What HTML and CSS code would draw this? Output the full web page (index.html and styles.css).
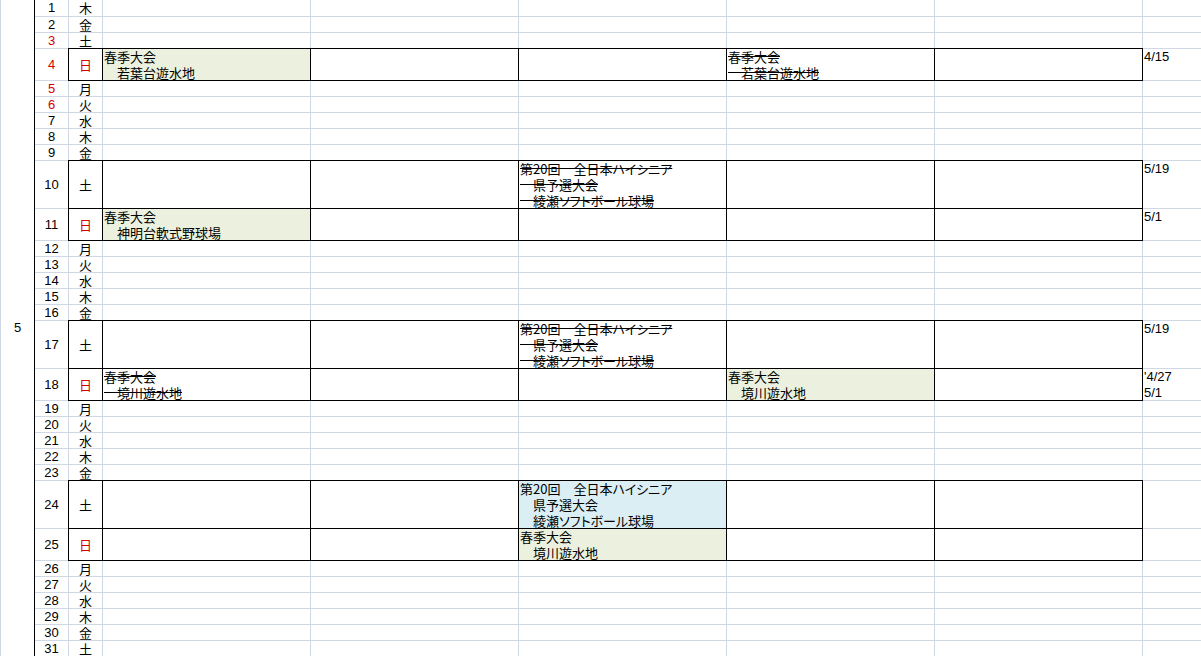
FILE: index.html
```html
<!DOCTYPE html>
<html lang="ja">
<head>
    <meta charset="UTF-8">
    <meta name="viewport" content="width=device-width, initial-scale=1.0">
    <title>5月 予定表</title>
    <link rel="stylesheet" href="styles.css">
</head>
<body>
    <div class="sheet">
        <div class="month">5</div>
        <div class="num">1</div><div class="wd">木</div><div></div><div></div><div></div><div></div><div></div><div></div>
        <div class="num">2</div><div class="wd">金</div><div></div><div></div><div></div><div></div><div></div><div></div>
        <div class="num red">3</div><div class="wd">土</div><div></div><div></div><div></div><div></div><div></div><div></div>
        <div class="num red">4</div><div class="wd box red">日</div><div class="box green">春季大会<br>　若葉台遊水地</div><div class="box"></div><div class="box"></div><div class="box del">春季大会<br>　若葉台遊水地</div><div class="box"></div><div class="memo">4/15</div>
        <div class="num red">5</div><div class="wd">月</div><div></div><div></div><div></div><div></div><div></div><div></div>
        <div class="num red">6</div><div class="wd">火</div><div></div><div></div><div></div><div></div><div></div><div></div>
        <div class="num">7</div><div class="wd">水</div><div></div><div></div><div></div><div></div><div></div><div></div>
        <div class="num">8</div><div class="wd">木</div><div></div><div></div><div></div><div></div><div></div><div></div>
        <div class="num">9</div><div class="wd">金</div><div></div><div></div><div></div><div></div><div></div><div></div>
        <div class="num">10</div><div class="wd box">土</div><div class="box"></div><div class="box"></div><div class="box del">第20回　全日本ハイシニア<br>　県予選大会<br>　綾瀬ソフトボール球場</div><div class="box"></div><div class="box"></div><div class="memo">5/19</div>
        <div class="num">11</div><div class="wd box red">日</div><div class="box green">春季大会<br>　神明台軟式野球場</div><div class="box"></div><div class="box"></div><div class="box"></div><div class="box"></div><div class="memo">5/1</div>
        <div class="num">12</div><div class="wd">月</div><div></div><div></div><div></div><div></div><div></div><div></div>
        <div class="num">13</div><div class="wd">火</div><div></div><div></div><div></div><div></div><div></div><div></div>
        <div class="num">14</div><div class="wd">水</div><div></div><div></div><div></div><div></div><div></div><div></div>
        <div class="num">15</div><div class="wd">木</div><div></div><div></div><div></div><div></div><div></div><div></div>
        <div class="num">16</div><div class="wd">金</div><div></div><div></div><div></div><div></div><div></div><div></div>
        <div class="num">17</div><div class="wd box">土</div><div class="box"></div><div class="box"></div><div class="box del">第20回　全日本ハイシニア<br>　県予選大会<br>　綾瀬ソフトボール球場</div><div class="box"></div><div class="box"></div><div class="memo">5/19</div>
        <div class="num">18</div><div class="wd box red">日</div><div class="box del">春季大会<br>　境川遊水地</div><div class="box"></div><div class="box"></div><div class="box green">春季大会<br>　境川遊水地</div><div class="box"></div><div class="memo">'4/27<br>5/1</div>
        <div class="num">19</div><div class="wd">月</div><div></div><div></div><div></div><div></div><div></div><div></div>
        <div class="num">20</div><div class="wd">火</div><div></div><div></div><div></div><div></div><div></div><div></div>
        <div class="num">21</div><div class="wd">水</div><div></div><div></div><div></div><div></div><div></div><div></div>
        <div class="num">22</div><div class="wd">木</div><div></div><div></div><div></div><div></div><div></div><div></div>
        <div class="num">23</div><div class="wd">金</div><div></div><div></div><div></div><div></div><div></div><div></div>
        <div class="num">24</div><div class="wd box">土</div><div class="box"></div><div class="box"></div><div class="box blue">第20回　全日本ハイシニア<br>　県予選大会<br>　綾瀬ソフトボール球場</div><div class="box"></div><div class="box"></div><div class="memo"></div>
        <div class="num">25</div><div class="wd box red">日</div><div class="box"></div><div class="box"></div><div class="box green">春季大会<br>　境川遊水地</div><div class="box"></div><div class="box"></div><div class="memo"></div>
        <div class="num">26</div><div class="wd">月</div><div></div><div></div><div></div><div></div><div></div><div></div>
        <div class="num">27</div><div class="wd">火</div><div></div><div></div><div></div><div></div><div></div><div></div>
        <div class="num">28</div><div class="wd">水</div><div></div><div></div><div></div><div></div><div></div><div></div>
        <div class="num">29</div><div class="wd">木</div><div></div><div></div><div></div><div></div><div></div><div></div>
        <div class="num">30</div><div class="wd">金</div><div></div><div></div><div></div><div></div><div></div><div></div>
        <div class="num">31</div><div class="wd">土</div><div></div><div></div><div></div><div></div><div></div><div></div>
    </div>
</body>
</html>
```

FILE: styles.css
```css
body {
    margin: 0;
    overflow: hidden;
    background: #fff;
    color: #000;
    font-family: "Noto Sans CJK JP", sans-serif;
    font-size: 13px;
}
.sheet {
    display: grid;
    grid-template-columns: 34px 34px 34px repeat(5, 208px) 100px;
    grid-template-rows: 17px repeat(2, 16px) 32px repeat(5, 16px) 48px 32px repeat(5, 16px) 48px 32px repeat(5, 16px) 48px 32px repeat(6, 16px);
    margin-top: -1px;
}
/* every cell draws all four lines and overlaps its neighbours by 1px */
.sheet > div {
    border: 1px solid #d0d7e5;
    margin: 0 -1px -1px 0;
    padding: 0 1px;
    line-height: 16px;
    white-space: nowrap;
    overflow: hidden;
    font-feature-settings: "palt";
}
.sheet .month {
    grid-column: 1;
    grid-row: 1 / 32;
    display: flex;
    align-items: center;
    justify-content: center;
    border-right-color: #000;
    border-bottom-color: #000;
    z-index: 1;
}
.month,
.num,
.memo {
    font-family: "Liberation Sans", Arial, sans-serif;
}
.num,
.wd {
    display: flex;
    align-items: center;
    justify-content: center;
}
.sheet .box {
    border-color: #000;
    z-index: 1;
}
.red {
    color: #d40000;
}
.green {
    background: #ebf1de;
}
.blue {
    background: #daeef3;
}
.del {
    text-decoration: line-through;
}
```
